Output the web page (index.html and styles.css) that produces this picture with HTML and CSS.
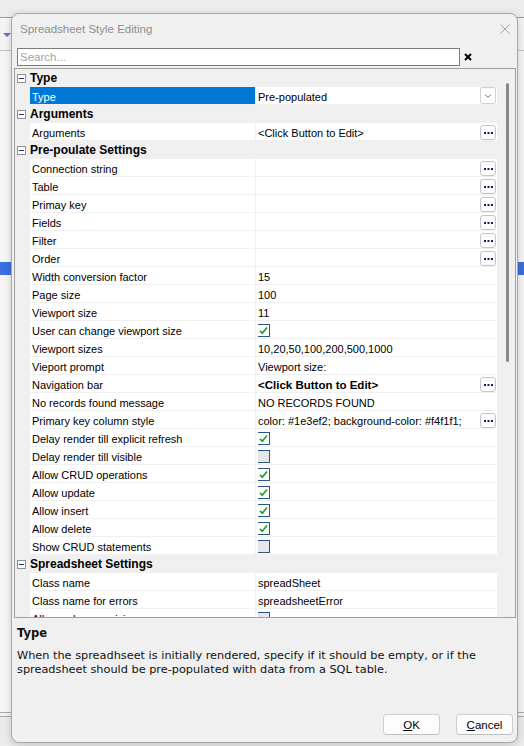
FILE: index.html
```html
<!DOCTYPE html>
<html lang="en">
  <head>
    <meta charset="UTF-8" />
    <meta name="viewport" content="width=device-width, initial-scale=1.0" />
    <title>Spreadsheet Style Editing</title>
    <link rel="stylesheet" href="styles.css">
  </head>
  <body>
    <!-- application behind the dialog -->
    <div class="app">
      <div class="app-toolbar"><span class="caret"></span></div>
      <div class="app-body">
        <div class="app-selected"></div>
      </div>
      <div class="app-footer"></div>
    </div>

    <div class="dialog">
      <div class="titlebar">
        <span class="title">Spreadsheet Style Editing</span>
        <svg class="close" width="10" height="10" viewBox="0 0 10 10">
          <path d="M0.5 0.5 L9.5 9.5 M9.5 0.5 L0.5 9.5" />
        </svg>
      </div>

      <div class="search-row">
        <input type="text" id="search" placeholder="Search..." />
        <svg class="clear" width="8" height="8" viewBox="0 0 8 8">
          <path d="M1 1 L7 7 M7 1 L1 7" />
        </svg>
      </div>

      <div class="grid">
        <div class="grid-rows" id="rows">
          <!-- rows are added by renderRows() -->
        </div>
        <div class="scrollbar"><div class="thumb"></div></div>
      </div>

      <div class="help">
        <div class="help-title">Type</div>
        <p>When the spreadhseet is initially rendered, specify if it should be empty, or if the spreadsheet should be pre-populated with data from a SQL table.</p>
      </div>

      <div class="actions">
        <button><u>O</u>K</button>
        <button><u>C</u>ancel</button>
      </div>
    </div>

    <script>
      const rows = [
        { cat: "Type" },
        { name: "Type", value: "Pre-populated", kind: "dropdown", selected: true },
        { cat: "Arguments" },
        { name: "Arguments", value: "<Click Button to Edit>", kind: "button" },
        { cat: "Pre-poulate Settings" },
        { name: "Connection string", kind: "button" },
        { name: "Table", kind: "button" },
        { name: "Primay key", kind: "button" },
        { name: "Fields", kind: "button" },
        { name: "Filter", kind: "button" },
        { name: "Order", kind: "button" },
        { name: "Width conversion factor", value: "15" },
        { name: "Page size", value: "100" },
        { name: "Viewport size", value: "11" },
        { name: "User can change viewport size", check: true },
        { name: "Viewport sizes", value: "10,20,50,100,200,500,1000" },
        { name: "Vieport prompt", value: "Viewport size:" },
        { name: "Navigation bar", value: "<Click Button to Edit>", bold: true, kind: "button" },
        { name: "No records found message", value: "NO RECORDS FOUND" },
        { name: "Primary key column style", value: "color: #1e3ef2; background-color: #f4f1f1;", kind: "button" },
        { name: "Delay render till explicit refresh", check: true },
        { name: "Delay render till visible", check: false },
        { name: "Allow CRUD operations", check: true },
        { name: "Allow update", check: true },
        { name: "Allow insert", check: true },
        { name: "Allow delete", check: true },
        { name: "Show CRUD statements", check: false },
        { cat: "Spreadsheet Settings" },
        { name: "Class name", value: "spreadSheet" },
        { name: "Class name for errors", value: "spreadsheetError" },
        { name: "Allow column resizing", check: false }
      ];

      const minusIcon =
        '<svg width="9" height="9" viewBox="0 0 9 9"><rect x="0.5" y="0.5" width="8" height="8" fill="#fff" stroke="#919191"/><path d="M2 4.5h5" stroke="#1d2a6b"/></svg>';
      const ellipsisBtn =
        '<span class="btn-edit"><svg width="14" height="13" viewBox="0 0 14 13"><rect x="3" y="6" width="2" height="2"/><rect x="6.5" y="6" width="2" height="2"/><rect x="10" y="6" width="2" height="2"/></svg></span>';
      const dropdownBtn =
        '<span class="btn-drop"><svg width="14" height="15" viewBox="0 0 14 15"><path d="M4 6.5 L7 9.5 L10 6.5" /></svg></span>';

      function checkbox(on) {
        const mark = on
          ? '<path d="M3 6.8 L5.3 9.3 L10 3.5" fill="none" stroke="#1f9e2a" stroke-width="1.7"/>'
          : "";
        return (
          '<svg class="check" width="13" height="13" viewBox="0 0 13 13"><rect x="0.5" y="0.5" width="12" height="12" fill="' +
          (on ? "#fff" : "#e6e6e6") +
          '" stroke="#2b5584"/>' +
          mark +
          "</svg>"
        );
      }

      function renderRows() {
        const list = document.getElementById("rows");
        rows.forEach((row) => {
          const div = document.createElement("div");
          if (row.cat) {
            div.className = "row category";
            div.innerHTML = '<span class="gutter">' + minusIcon + '</span><span class="cat-label"></span>';
            div.querySelector(".cat-label").textContent = row.cat;
          } else {
            div.className = row.selected ? "row selected" : "row";
            div.innerHTML =
              '<span class="gutter"></span><span class="name"></span><span class="value"><span class="text"></span></span>';
            div.querySelector(".name").textContent = row.name;
            const value = div.querySelector(".value");
            const text = value.querySelector(".text");
            if (row.check !== undefined) {
              text.innerHTML = checkbox(row.check);
            } else {
              text.textContent = row.value || "";
            }
            if (row.bold) text.classList.add("bold");
            if (row.kind === "button") value.insertAdjacentHTML("beforeend", ellipsisBtn);
            if (row.kind === "dropdown") value.insertAdjacentHTML("beforeend", dropdownBtn);
          }
          list.appendChild(div);
        });
      }

      renderRows();
    </script>
  </body>
</html>
```

FILE: styles.css
```css
* {
  box-sizing: border-box;
}
body {
  margin: 0;
  width: 524px;
  height: 746px;
  overflow: hidden;
  position: relative;
  background-color: #ececec;
  font-family: "Liberation Sans", Arial, sans-serif;
  font-size: 11px;
  color: #000;
}

/* app in the background */
.app {
  display: flex;
  flex-direction: column;
  height: 746px;
}
.app-toolbar {
  margin-top: 17px;
  height: 34px;
  padding: 15px 0 0 3px;
  background-color: #f4f4f4;
  border-top: 1px solid #9c9c9c;
  border-bottom: 1px solid #c4c4c4;
}
.caret {
  display: block;
  width: 0;
  height: 0;
  border-left: 4px solid transparent;
  border-right: 4px solid transparent;
  border-top: 4px solid #6a6ad8;
}
.app-body {
  height: 661px;
  background-color: #f6f6f6;
}
.app-selected {
  margin-top: 211px;
  height: 13px;
  background-color: #3b6fe3;
}
.app-footer {
  height: 5px;
  border-top: 1px solid #a9a9a9;
  border-bottom: 1px solid #a9a9a9;
  background-color: #f4f4f4;
}

/* dialog window */
.dialog {
  position: absolute;
  left: 11px;
  top: 13px;
  width: 507px;
  height: 730px;
  display: flex;
  flex-direction: column;
  background-color: #f0f0f0;
  border: 1px solid #a8a8a8;
  border-radius: 8px;
  box-shadow: 0 2px 8px rgba(0, 0, 0, 0.18);
  overflow: hidden;
}
.titlebar {
  height: 29px;
  flex: none;
  display: flex;
  align-items: center;
  justify-content: space-between;
  padding: 0 7px 0 8px;
}
.title {
  font-size: 11.5px;
  color: #8f8f8f;
}
.close path {
  stroke: #a5a5a5;
  stroke-width: 1;
}

.search-row {
  margin-top: 5px;
  padding-left: 5px;
  display: flex;
  align-items: center;
  flex: none;
}
.search-row input[type="text"] {
  width: 443px;
  height: 18px;
  padding: 0 2px;
  border: 1px solid #7c7c7c;
  background-color: #fff;
  font-family: "Liberation Sans", Arial, sans-serif;
  font-size: 11.5px;
  outline: none;
}
.search-row input::placeholder {
  color: #a3a3a3;
}
.clear {
  margin-left: 4px;
}
.clear path {
  stroke: #000;
  stroke-width: 2;
}

/* property grid */
.grid {
  margin: 2px 1px 0 2px;
  height: 550px;
  flex: none;
  display: flex;
  border: 1px solid #a0a0a0;
  background-color: #f0f0f0;
}
.grid-rows {
  flex: 1;
  overflow: hidden;
}
.scrollbar {
  width: 18px;
  flex: none;
  padding: 14px 0 0 9px;
  background-color: #f0f0f0;
}
.thumb {
  width: 3px;
  height: 279px;
  border-radius: 2px;
  background-color: #8a8a8a;
}
.row {
  display: flex;
  height: 18px;
}
.gutter {
  width: 15px;
  flex: none;
  display: flex;
  align-items: center;
  padding-left: 2px;
  background-color: #f0f0f0;
}
.gutter svg {
  display: block;
}
.cat-label {
  flex: 1;
  padding: 1px 0 0 0;
  line-height: 17px;
  font-size: 12px;
  font-weight: bold;
  background-color: #f0f0f0;
}
.name {
  width: 226px;
  flex: none;
  padding: 2px 0 0 2px;
  line-height: 17px;
  white-space: nowrap;
  overflow: hidden;
  background-color: #fff;
  border-right: 1px solid #f0f0f0;
  border-bottom: 1px solid #f0f0f0;
}
.selected .name {
  background-color: #0078d7;
  color: #fff;
}
.value {
  flex: 1;
  min-width: 0;
  display: flex;
  align-items: center;
  padding: 0 1px 0 2px;
  background-color: #fff;
  border-bottom: 1px solid #f0f0f0;
}
.value .text {
  flex: 1;
  min-width: 0;
  height: 17px;
  padding-top: 2px;
  line-height: 17px;
  white-space: nowrap;
  overflow: hidden;
}
.value .text.bold {
  font-weight: bold;
  font-size: 11.5px;
}
.check {
  display: block;
  margin: 1px 0 0 -1px;
}
.btn-edit {
  width: 16px;
  height: 15px;
  flex: none;
  align-self: flex-end;
  display: flex;
  align-items: center;
  justify-content: center;
  border: 1px solid #c4c4c4;
  border-radius: 3px;
  background-color: #fcfcfc;
}
.btn-edit rect {
  fill: #1b1d5e;
}
.btn-drop {
  width: 16px;
  height: 17px;
  flex: none;
  display: flex;
  align-items: center;
  justify-content: center;
  border: 1px solid #d2d2d2;
  border-radius: 2px;
  background-color: #fff;
}
.btn-drop path {
  fill: none;
  stroke: #6e6e6e;
  stroke-width: 1;
}

/* description */
.help {
  padding: 8px 5px 0 5px;
  font-family: "DejaVu Sans", Verdana, sans-serif;
  color: #111;
}
.help-title {
  font-size: 11.5px;
  font-weight: bold;
  line-height: 15px;
}
.help p {
  margin: 8px 0 0 0;
  font-size: 11.3px;
  line-height: 14px;
}

.actions {
  margin-top: auto;
  display: flex;
  justify-content: flex-end;
  gap: 16px;
  padding: 0 4px 7px 0;
}
.actions button {
  width: 57px;
  height: 21px;
  padding: 0;
  border: 1px solid #cfcfcf;
  border-bottom-color: #bdbdbd;
  border-radius: 4px;
  background-color: #fdfdfd;
  font-family: "Liberation Sans", Arial, sans-serif;
  font-size: 11.5px;
  color: #000;
}
```
